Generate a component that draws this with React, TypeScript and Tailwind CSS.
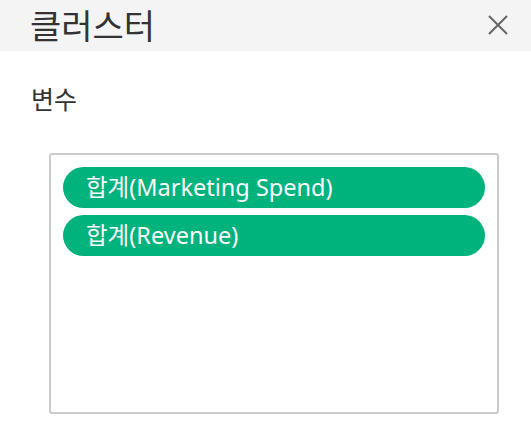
import React from "react";

export default function App() {
  const font = { fontFamily: '"Noto Sans", "Noto Sans CJK KR", sans-serif' };
  return (
    <div className="w-[531px] h-[445px] bg-white text-[#333333]" style={font}>
      <div className="h-[51px] bg-[#f4f4f4] flex items-center justify-between pl-[30px] pr-[22px]">
        <span className="text-[34px] leading-none text-[#333333] mt-[1px]">클러스터</span>
        <svg width="22" height="22" viewBox="0 0 22 22" className="mb-[2px]">
          <path d="M2 2 L20 20 M20 2 L2 20" stroke="#666666" strokeWidth="2" fill="none" />
        </svg>
      </div>
      <div className="pl-[31px] pt-[34px] text-[25px] leading-[28px]">변수</div>
      <div className="ml-[49px] mt-[40px] w-[450px] h-[261px] border-2 border-[#cccccc] rounded-[3px] pt-[12px] px-[12px] flex flex-col gap-[7px]">
        {["합계(Marketing Spend)", "합계(Revenue)"].map((t) => (
          <div
            key={t}
            className="h-[41px] rounded-full bg-[#00b27c] text-white text-[23.5px] flex items-center pl-[23px]"
          >
            {t}
          </div>
        ))}
      </div>
    </div>
  );
}
